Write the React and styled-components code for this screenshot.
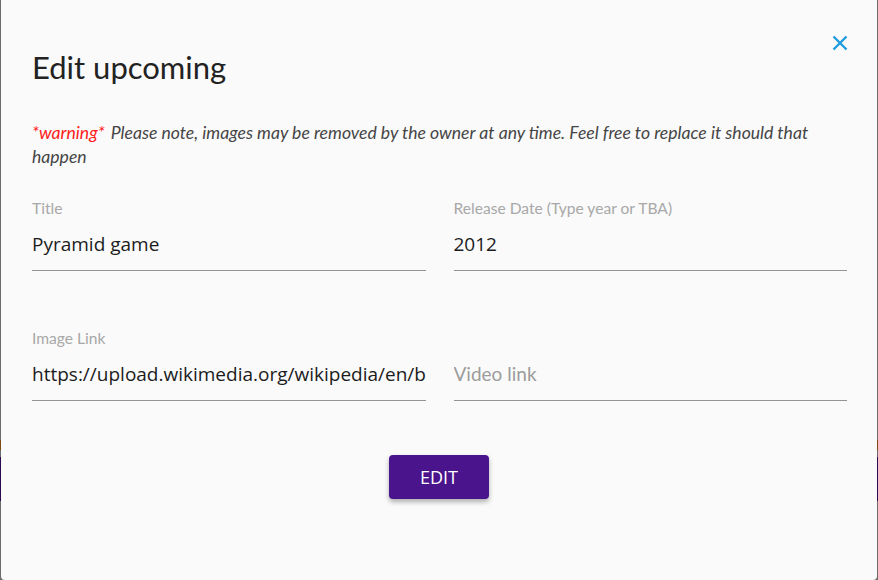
import React from 'react'
import styled, { createGlobalStyle } from 'styled-components'

const Global = createGlobalStyle`
  html, body {
    margin: 0;
    padding: 0;
    height: 100%;
    overflow: hidden;
  }
  #root {
    height: 100%;
  }
`

const Backdrop = styled.div`
  height: 580px;
  display: flex;
  padding: 0 1px;
  background:
    linear-gradient(to bottom,
      #6b6b6b 0, #6b6b6b 440px,
      #7a4a10 440px, #7a4a10 450px,
      #6b6b6b 450px, #6b6b6b 457px,
      #2a0a50 457px, #2a0a50 501px,
      #6b6b6b 501px);
  box-sizing: border-box;
`

const Modal = styled.div`
  position: relative;
  flex: 1;
  background: #fafafa;
  border-radius: 0 0 4px 4px;
  padding: 49px 30px 0 30px;
  font-family: 'Lato', 'Noto Sans', sans-serif;
  box-sizing: border-box;
`

const Close = styled.button`
  position: absolute;
  top: 34px;
  right: 28px;
  width: 18px;
  height: 18px;
  padding: 0;
  border: none;
  background: transparent;
  cursor: pointer;
  display: flex;
  align-items: center;
  justify-content: center;
`

const Heading = styled.h2`
  margin: 0;
  font-size: 31px;
  font-weight: 400;
  line-height: 36px;
  color: #222;
  padding-left: 1px;
`

const Warning = styled.p`
  margin: 36px 0 0 1px;
  font-size: 17.6px;
  line-height: 24px;
  font-style: italic;
  color: #454545;
  max-width: 800px;

  span {
    color: #ff2020;
    margin-right: 2px;
  }
`

const Grid = styled.div`
  display: grid;
  grid-template-columns: 1fr 1fr;
  column-gap: 28px;
  row-gap: 57px;
  margin-top: 29px;
  padding-left: 1px;
`

const Field = styled.label`
  display: flex;
  flex-direction: column;
`

const Label = styled.span`
  min-height: 20px;
  font-size: 15.6px;
  line-height: 20px;
  color: #a8a8a8;
`

const Input = styled.input`
  margin-top: 6px;
  height: 47px;
  box-sizing: border-box;
  padding: 0 0 7px;
  border: none;
  border-bottom: 1px solid #949494;
  background: transparent;
  font-family: 'Open Sans', 'Noto Sans', sans-serif;
  font-size: 19px;
  color: #1c1c1c;
  outline: none;

  &::placeholder {
    font-family: 'Lato', 'Noto Sans', sans-serif;
    font-size: 19px;
    color: #9c9c9c;
  }
`

const Actions = styled.div`
  display: flex;
  justify-content: center;
  margin-top: 54px;
`

const Button = styled.button`
  width: 100px;
  height: 44px;
  border: none;
  border-radius: 4px;
  background: #4a148c;
  color: #fff;
  font-family: 'Open Sans', 'Noto Sans', sans-serif;
  font-size: 18px;
  box-shadow: 0 3px 5px rgba(0, 0, 0, 0.3);
  cursor: pointer;
`

const fields = [
  { label: 'Title', value: 'Pyramid game' },
  { label: 'Release Date (Type year or TBA)', value: '2012' },
  { label: 'Image Link', value: 'https://upload.wikimedia.org/wikipedia/en/b' },
  { label: '', value: '', placeholder: 'Video link' },
]

const App = () => {
  return (
    <>
      <Global />
      <Backdrop>
        <Modal>
          <Close aria-label="close">
            <svg width="16" height="16" viewBox="0 0 16 16">
              <path d="M1.5 1.5 L14.5 14.5 M14.5 1.5 L1.5 14.5" stroke="#1e9be0" strokeWidth="2.4" />
            </svg>
          </Close>
          <Heading>Edit upcoming</Heading>
          <Warning>
            <span>*warning*</span> Please note, images may be removed by the owner at any time. Feel free to replace it should that happen
          </Warning>
          <Grid>
            {fields.map((f, i) => (
              <Field key={i}>
                <Label>{f.label}</Label>
                <Input defaultValue={f.value} placeholder={f.placeholder} />
              </Field>
            ))}
          </Grid>
          <Actions>
            <Button>EDIT</Button>
          </Actions>
        </Modal>
      </Backdrop>
    </>
  )
}

export default App
